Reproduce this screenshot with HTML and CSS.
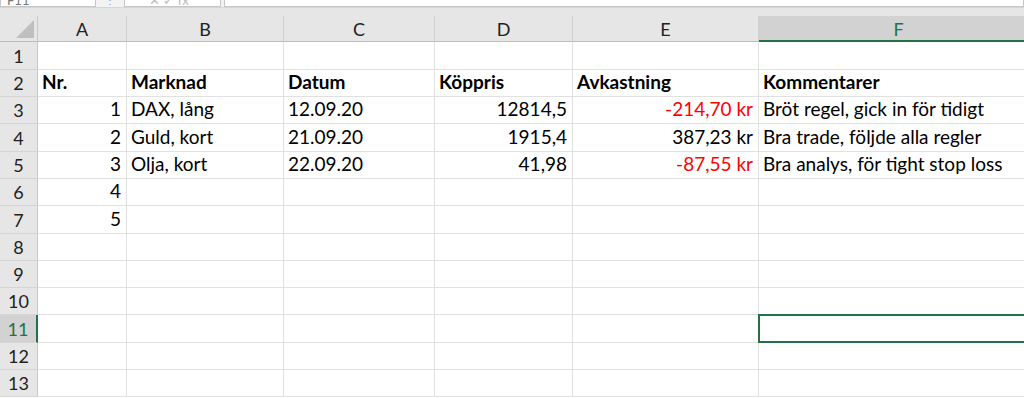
FILE: index.html
```html
<!DOCTYPE html>
<html lang="sv">

<head>
    <meta charset="UTF-8">
    <title>Trading journal</title>
    <link rel="stylesheet" href="styles.css">
</head>

<body>
    <!-- Formula bar (only the lower edge is visible) -->
    <div class="toolbar">
        <div class="namebox">F11</div>
        <div class="dots">⋮</div>
        <div class="fxbox">✕ ✓ fx</div>
        <div class="formula"></div>
    </div>
    <div class="band"></div>

    <!-- Sheet grid, filled by the script below -->
    <div class="sheet" id="sheet"></div>

    <script>
        const cols = ["A", "B", "C", "D", "E", "F"];
        const selCol = "F";
        const selRow = 11;

        // [A, B, C, D, E, F], "r:" means right aligned, "n:" red + right aligned
        const data = {
            2: [["b", "Nr."], ["b", "Marknad"], ["b", "Datum"], ["b", "Köppris"], ["b", "Avkastning"], ["b", "Kommentarer"]],
            3: [["r", "1"], ["", "DAX, lång"], ["", "12.09.20"], ["r", "12814,5"], ["n", "-214,70 kr"], ["", "Bröt regel, gick in för tidigt"]],
            4: [["r", "2"], ["", "Guld, kort"], ["", "21.09.20"], ["r", "1915,4"], ["r", "387,23 kr"], ["", "Bra trade, följde alla regler"]],
            5: [["r", "3"], ["", "Olja, kort"], ["", "22.09.20"], ["r", "41,98"], ["n", "-87,55 kr"], ["", "Bra analys, för tight stop loss"]],
            6: [["r", "4"]],
            7: [["r", "5"]]
        };

        const sheet = document.getElementById("sheet");

        function cell(cls, text) {
            const div = document.createElement("div");
            div.className = cls;
            div.textContent = text || "";
            sheet.appendChild(div);
            return div;
        }

        // header row
        const corner = cell("corner");
        corner.innerHTML = '<span class="tri"></span>';
        cols.forEach((c) => {
            cell("colhead" + (c === selCol ? " sel" : ""), c);
        });

        for (let r = 1; r <= 13; r++) {
            cell("rowhead" + (r === selRow ? " sel" : ""), r);
            const row = data[r] || [];
            cols.forEach((c, i) => {
                const item = row[i] || ["", ""];
                let cls = "cell";
                if (item[0] === "b") cls += " bold";
                if (item[0] === "r") cls += " right";
                if (item[0] === "n") cls += " right neg";
                if (r === selRow && c === selCol) cls += " active";
                cell(cls, item[1]);
            });
        }
    </script>
</body>

</html>
```

FILE: styles.css
```css
body {
    margin: 0;
    padding: 0;
    background-color: #fff;
    font-family: 'Lato', 'Liberation Sans', sans-serif;
    overflow: hidden;
}

.toolbar {
    display: flex;
    height: 7px;
    background-color: #f3f3f3;
    border-bottom: 1px solid #d5d5d5;
    overflow: hidden;
}

.namebox,
.fxbox,
.formula {
    height: 7px;
    background-color: #fff;
    box-sizing: border-box;
    border: 1px solid #c6c6c6;
    border-top: none;
    font-size: 13px;
    line-height: 0;
    color: #777;
}

.namebox {
    width: 96px;
    padding-left: 6px;
}

.dots {
    width: 28px;
    font-size: 10px;
    line-height: 0;
    color: #999;
    text-align: center;
}

.fxbox {
    width: 97px;
    padding-left: 24px;
    color: #bbb;
}

.formula {
    flex: 1;
    margin-left: 3px;
}

.band {
    height: 8px;
    background-color: #e6e6e6;
}

.sheet {
    display: grid;
    grid-template-columns: 38px 89px 157px 151px 138px 186px 280px;
    grid-template-rows: 26px 28px 27px 27px 28px 27px 27px 28px 27px 27px 27px 28px 27px 27px;
}

.sheet > div {
    box-sizing: border-box;
    display: flex;
    overflow: visible;
    white-space: nowrap;
}

.corner {
    position: relative;
    background-color: #e6e6e6;
    border-right: 1px solid #c8c8c8;
    border-bottom: 1px solid #bdbdbd;
}

.tri {
    position: absolute;
    right: 3px;
    bottom: 3px;
    width: 0;
    height: 0;
    border-left: 18px solid transparent;
    border-bottom: 18px solid #bfbfbf;
}

.colhead {
    background-color: #e6e6e6;
    border-right: 1px solid #d0d0d0;
    border-bottom: 1px solid #bdbdbd;
    justify-content: center;
    align-items: center;
    font-size: 18px;
    color: #222;
    padding-top: 1px;
}

.colhead.sel {
    background-color: #d2d2d2;
    border-bottom: 2px solid #217346;
    color: #217346;
}

.rowhead {
    background-color: #e6e6e6;
    border-right: 1px solid #c8c8c8;
    border-bottom: 1px solid #d5d5d5;
    justify-content: center;
    align-items: center;
    font-size: 18px;
    color: #222;
}

.rowhead.sel {
    background-color: #d2d2d2;
    border-right: 2px solid #217346;
    color: #217346;
}

.cell {
    border-right: 1px solid #e1e1e1;
    border-bottom: 1px solid #e1e1e1;
    align-items: flex-end;
    padding: 0 5px 3px 4px;
    font-size: 19px;
    color: #000;
}

.cell.bold {
    font-weight: bold;
}

.cell.right {
    justify-content: flex-end;
}

.cell.neg {
    color: #ff0000;
}

.cell.active {
    border: 2px solid #217346;
    margin: -1px 0 0 -1px;
}
```
